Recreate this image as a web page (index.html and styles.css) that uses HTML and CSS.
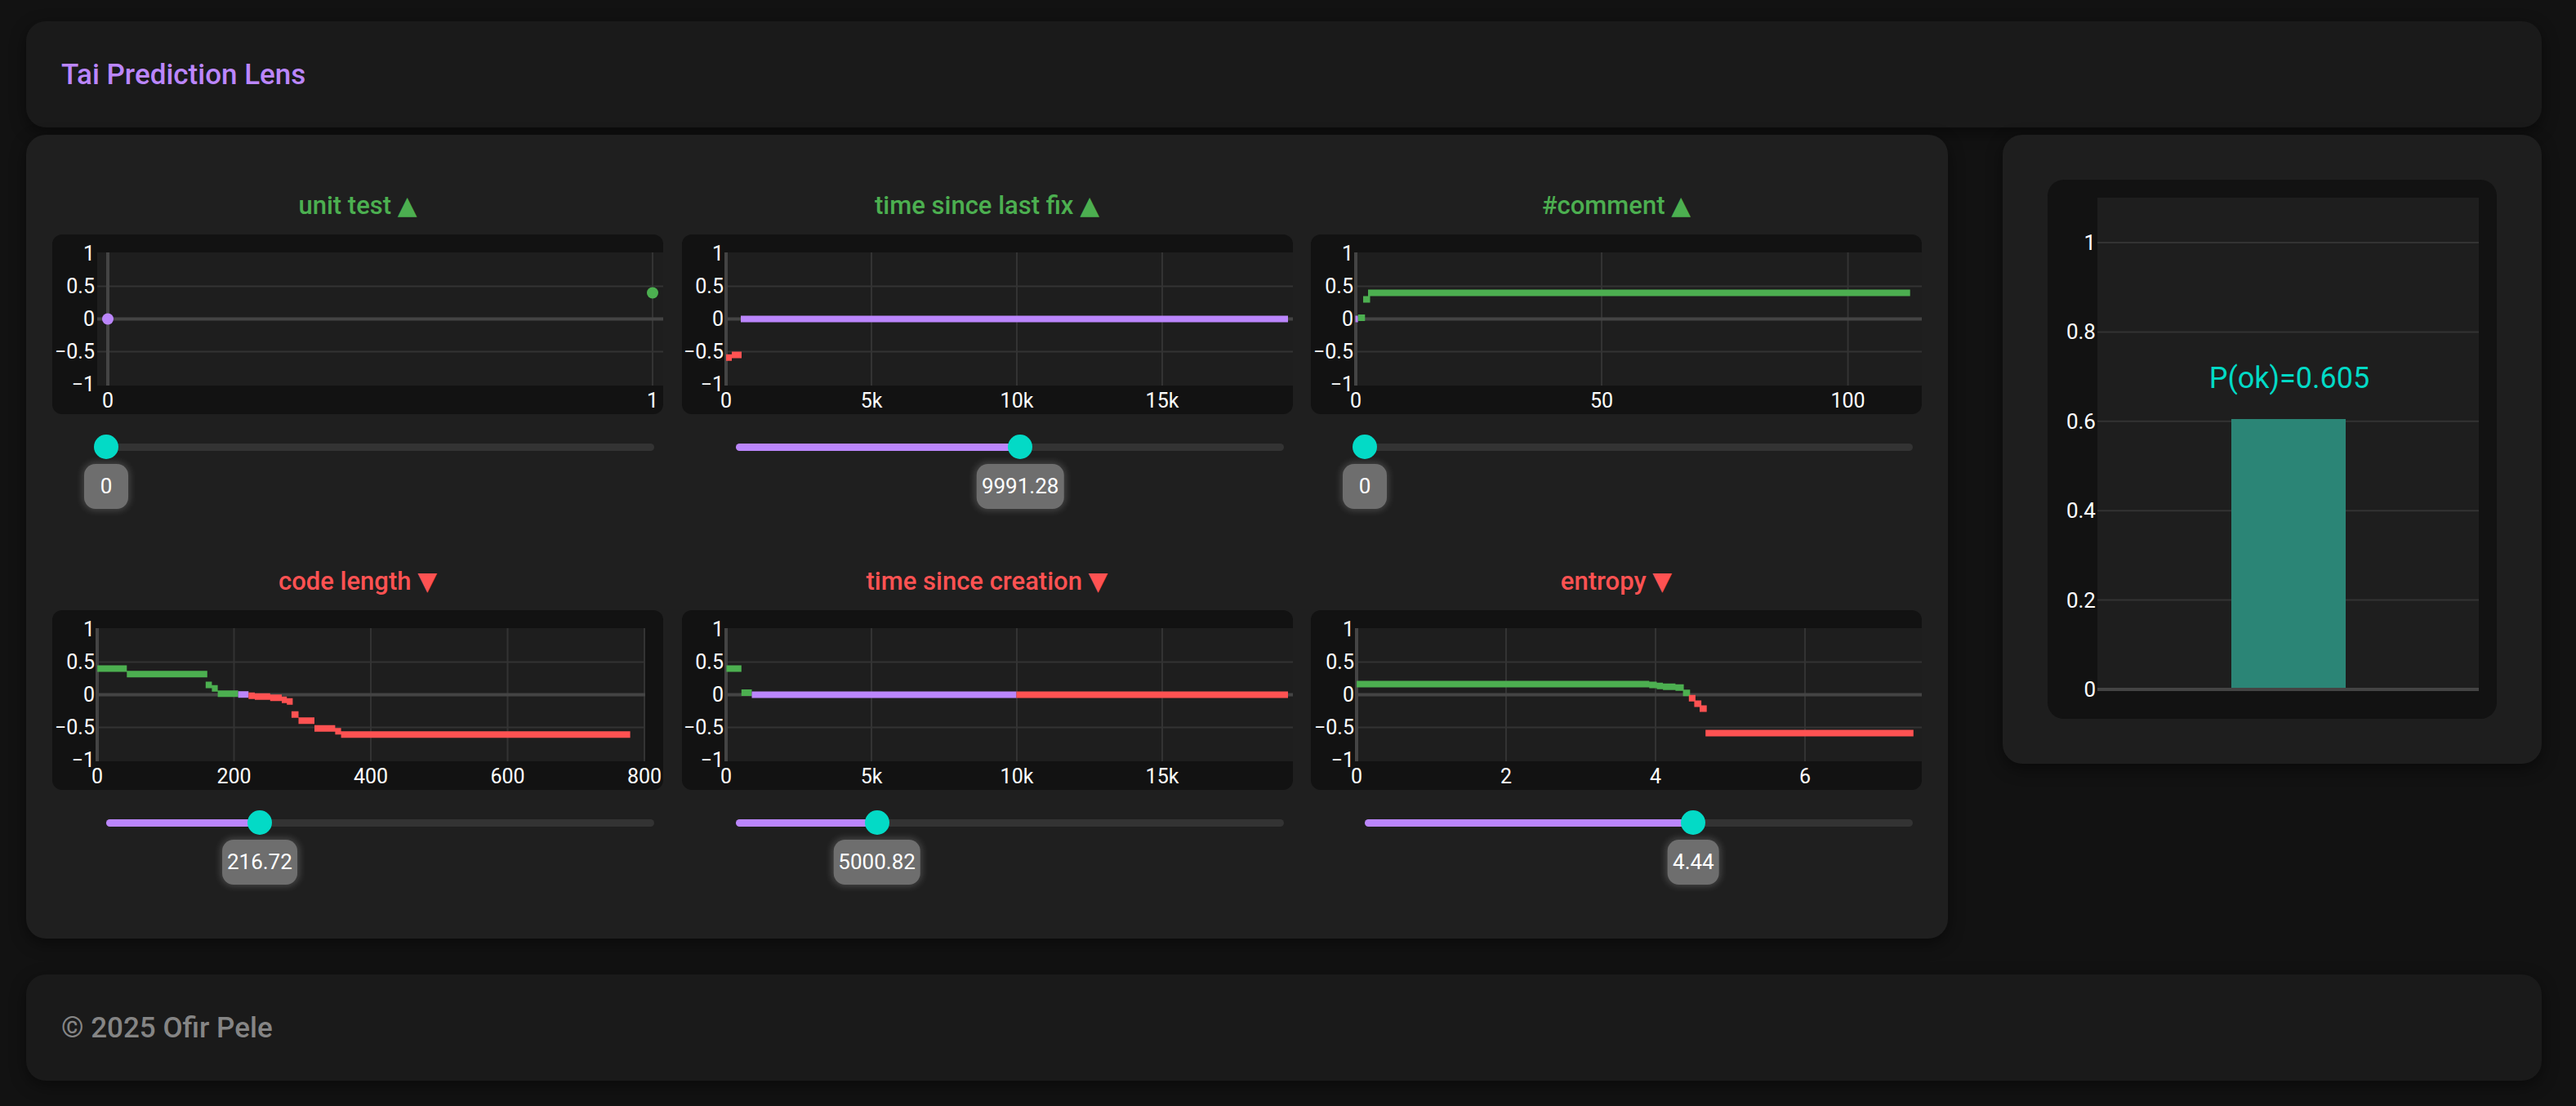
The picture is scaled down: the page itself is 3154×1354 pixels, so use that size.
FILE: index.html
```html
<!DOCTYPE html>
<html lang="en">
<head>
<meta charset="utf-8">
<title>Tai Prediction Lens</title>
<link rel="stylesheet" href="styles.css">
</head>
<body>
<div class="page">
  <header class="card header">
    <h1 class="brand">Tai Prediction Lens</h1>
  </header>

  <main class="content">
    <section class="card features">

      <div class="feature">
        <div class="feat-title up">unit test ▲</div>
        <div class="chart">
          <svg class="plot" viewBox="0 0 748 220">
            <rect class="bg" x="55" y="22" width="693" height="163"/>
            <path class="grid" d="M55 63.5H748M55 143.5H748M735 22V185"/>
            <path class="zero" d="M55 103.5H748M68 22V185"/>
            <circle cx="68" cy="103.5" r="7" fill="#bb86fc"/>
            <circle cx="735" cy="71.5" r="7" fill="#4caf50"/>
            <g class="ylab"><text x="52" y="32.3">1</text><text x="52" y="72.3">0.5</text><text x="52" y="112.3">0</text><text x="52" y="152.3">−0.5</text><text x="52" y="192.3">−1</text></g>
            <g class="xlab"><text x="68" y="212">0</text><text x="735" y="212">1</text></g>
          </svg>
        </div>
        <div class="slider"><div class="rail"><div class="track" style="width:0%"></div><div class="thumb" style="left:0%"><span class="value-label">0</span></div></div></div>
      </div>

      <div class="feature">
        <div class="feat-title up">time since last fix ▲</div>
        <div class="chart">
          <svg class="plot" viewBox="0 0 748 220">
            <rect class="bg" x="54" y="22" width="694" height="163"/>
            <path class="grid" d="M54 63.5H748M54 143.5H748M232 22V185M410 22V185M588 22V185"/>
            <path class="zero" d="M54 103.5H748M54 22V185"/>
            <path class="seg red" d="M54 150.7H61M61 147.5H73"/>
            <path class="seg purple" d="M72 103.5H742"/>
            <g class="ylab"><text x="51" y="32.3">1</text><text x="51" y="72.3">0.5</text><text x="51" y="112.3">0</text><text x="51" y="152.3">−0.5</text><text x="51" y="192.3">−1</text></g>
            <g class="xlab"><text x="54" y="212">0</text><text x="232" y="212">5k</text><text x="410" y="212">10k</text><text x="588" y="212">15k</text></g>
          </svg>
        </div>
        <div class="slider"><div class="rail"><div class="track" style="width:51.96%"></div><div class="thumb" style="left:51.96%"><span class="value-label">9991.28</span></div></div></div>
      </div>

      <div class="feature">
        <div class="feat-title up">#comment ▲</div>
        <div class="chart">
          <svg class="plot" viewBox="0 0 748 220">
            <rect class="bg" x="55" y="22" width="693" height="163"/>
            <path class="grid" d="M55 63.5H748M55 143.5H748M356 22V185M657.6 22V185"/>
            <path class="zero" d="M55 103.5H748M55 22V185"/>
            <path class="seg purple" d="M54.5 103.5H57.7"/>
            <path class="seg green" d="M57.7 102H66.3M64 79.5H72.5M70 71.5H733.7"/>
            <g class="ylab"><text x="52" y="32.3">1</text><text x="52" y="72.3">0.5</text><text x="52" y="112.3">0</text><text x="52" y="152.3">−0.5</text><text x="52" y="192.3">−1</text></g>
            <g class="xlab"><text x="55" y="212">0</text><text x="356" y="212">50</text><text x="657.6" y="212">100</text></g>
          </svg>
        </div>
        <div class="slider"><div class="rail"><div class="track" style="width:0%"></div><div class="thumb" style="left:0%"><span class="value-label">0</span></div></div></div>
      </div>

      <div class="feature">
        <div class="feat-title down">code length ▼</div>
        <div class="chart">
          <svg class="plot" viewBox="0 0 748 220">
            <rect class="bg" x="55" y="22" width="671" height="163"/>
            <path class="grid" d="M55 63.5H726M55 143.5H726M222.5 22V185M390 22V185M557.5 22V185M725 22V185"/>
            <path class="zero" d="M55 103.5H726M55 22V185"/>
            <path class="seg green" d="M55.1 71.5H91.3M91.3 78.2H189.8M187.8 91.5H195.4M195.4 95.7H202.6M202.6 102.3H227.6"/>
            <path class="seg purple" d="M227.6 103.2H240.3"/>
            <path class="seg red" d="M240.3 104.7H248M248 105.7H266.8M266.8 107.3H281M281 109.7H287.2M287.2 111.7H294.4M292.9 127.7H301.5M301.5 135.3H321M321 144.7H346.4M346.4 148.3H353.6M353.6 152.2H707.6"/>
            <g class="ylab"><text x="52" y="32.3">1</text><text x="52" y="72.3">0.5</text><text x="52" y="112.3">0</text><text x="52" y="152.3">−0.5</text><text x="52" y="192.3">−1</text></g>
            <g class="xlab"><text x="55" y="212">0</text><text x="222.5" y="212">200</text><text x="390" y="212">400</text><text x="557.5" y="212">600</text><text x="725" y="212">800</text></g>
          </svg>
        </div>
        <div class="slider"><div class="rail"><div class="track" style="width:28%"></div><div class="thumb" style="left:28%"><span class="value-label">216.72</span></div></div></div>
      </div>

      <div class="feature">
        <div class="feat-title down">time since creation ▼</div>
        <div class="chart">
          <svg class="plot" viewBox="0 0 748 220">
            <rect class="bg" x="54" y="22" width="694" height="163"/>
            <path class="grid" d="M54 63.5H748M54 143.5H748M232 22V185M410 22V185M588 22V185"/>
            <path class="zero" d="M54 103.5H748M54 22V185"/>
            <path class="seg green" d="M54.4 71.5H72.8M72.8 101H85.5"/>
            <path class="seg purple" d="M85.5 103.5H409.5"/>
            <path class="seg red" d="M409.5 103.5H742"/>
            <g class="ylab"><text x="51" y="32.3">1</text><text x="51" y="72.3">0.5</text><text x="51" y="112.3">0</text><text x="51" y="152.3">−0.5</text><text x="51" y="192.3">−1</text></g>
            <g class="xlab"><text x="54" y="212">0</text><text x="232" y="212">5k</text><text x="410" y="212">10k</text><text x="588" y="212">15k</text></g>
          </svg>
        </div>
        <div class="slider"><div class="rail"><div class="track" style="width:25.8%"></div><div class="thumb" style="left:25.8%"><span class="value-label">5000.82</span></div></div></div>
      </div>

      <div class="feature">
        <div class="feat-title down">entropy ▼</div>
        <div class="chart">
          <svg class="plot" viewBox="0 0 748 220">
            <rect class="bg" x="56" y="22" width="692" height="163"/>
            <path class="grid" d="M56 63.5H748M56 143.5H748M239 22V185M422 22V185M605 22V185"/>
            <path class="zero" d="M56 103.5H748M56 22V185"/>
            <path class="seg green" d="M56.1 90.5H414.3M414.3 91.5H423.5M423.5 92.8H431.1M431.1 93.8H446.4M446.4 94.8H456.6M455.6 101.2H464.3"/>
            <path class="seg red" d="M462.8 107.8H470.9M469.4 114.5H478.1M476 120.5H484.7M483.2 150.5H737.8"/>
            <g class="ylab"><text x="53" y="32.3">1</text><text x="53" y="72.3">0.5</text><text x="53" y="112.3">0</text><text x="53" y="152.3">−0.5</text><text x="53" y="192.3">−1</text></g>
            <g class="xlab"><text x="56" y="212">0</text><text x="239" y="212">2</text><text x="422" y="212">4</text><text x="605" y="212">6</text></g>
          </svg>
        </div>
        <div class="slider"><div class="rail"><div class="track" style="width:59.97%"></div><div class="thumb" style="left:59.97%"><span class="value-label">4.44</span></div></div></div>
      </div>

    </section>

    <aside class="card prob">
      <div class="prob-chart">
        <svg class="plot" viewBox="0 0 550 660">
          <rect class="bg" x="61" y="22" width="467" height="603"/>
          <path class="grid" d="M61 514.6H528M61 405.2H528M61 295.8H528M61 186.4H528M61 77H528"/>
          <rect x="225" y="293" width="140" height="331" fill="#2b8576"/>
          <path class="zero" d="M61 624H528"/>
          <text class="plabel" x="296" y="255">P(ok)=0.605</text>
          <g class="ylab big"><text x="59" y="86">1</text><text x="59" y="195.4">0.8</text><text x="59" y="304.8">0.6</text><text x="59" y="414.2">0.4</text><text x="59" y="523.6">0.2</text><text x="59" y="633">0</text></g>
        </svg>
      </div>
    </aside>
  </main>

  <footer class="card footer">© 2025 Ofir Pele</footer>
</div>
</body>
</html>
```
FILE: styles.css
```css
* { box-sizing: border-box; }

html, body {
  margin: 0;
  padding: 0;
  background: #121212;
}

body {
  font-family: Roboto, "Noto Sans", "DejaVu Sans", sans-serif;
  color: #ffffff;
}

.page {
  padding: 26px 42px 30px 32px;
  display: flex;
  flex-direction: column;
}

.card {
  background: #1e1e1e;
  border-radius: 24px;
  box-shadow: 0 6px 20px rgba(0, 0, 0, 0.45);
}

.header {
  height: 130px;
  display: flex;
  align-items: center;
  padding: 0 43px;
  background: #1a1a1a;
}

.brand {
  margin: 0;
  font-size: 35px;
  font-weight: 500;
  color: #bb86fc;
}

.content {
  display: flex;
  align-items: flex-start;
  gap: 67px;
  margin-top: 9px;
}

.features {
  flex: none;
  width: 2353px;
  padding: 32px;
  display: grid;
  grid-template-columns: repeat(3, 1fr);
  column-gap: 22.5px;
  background: #1f1f1f;
}

.feature {
  padding: 37px 0 95px;
}

.feat-title {
  font-size: 31px;
  font-weight: 500;
  line-height: 36px;
  text-align: center;
  margin-bottom: 17px;
}

.up { color: #4caf50; }
.down { color: #ff5252; }

.chart {
  height: 220px;
  background: #121212;
  border-radius: 12px;
  overflow: hidden;
}

.plot {
  display: block;
  width: 100%;
  height: 100%;
}

.plot .bg { fill: #1e1e1e; }
.plot .grid { stroke: #333333; stroke-width: 2; fill: none; }
.plot .zero { stroke: #444444; stroke-width: 4; fill: none; }
.plot .seg { stroke-width: 8; fill: none; }
.plot .green { stroke: #4caf50; }
.plot .red { stroke: #ff5252; }
.plot .purple { stroke: #bb86fc; }

.plot text {
  font-family: Roboto, "Noto Sans", sans-serif;
  font-size: 25px;
  fill: #ffffff;
}

.plot .ylab text { text-anchor: end; }
.plot .xlab text { text-anchor: middle; }
.plot .big text { font-size: 26px; }

.plot .plabel {
  font-size: 36px;
  fill: #03dac6;
  text-anchor: middle;
}

.slider {
  margin-top: 25px;
  padding: 0 11px 0 66px;
}

.rail {
  position: relative;
  height: 30px;
}

.rail::before {
  content: "";
  position: absolute;
  left: 0;
  right: 0;
  top: 10.5px;
  height: 9px;
  border-radius: 5px;
  background: #333333;
}

.track {
  position: absolute;
  left: 0;
  top: 10.5px;
  height: 9px;
  border-radius: 5px;
  background: #bb86fc;
}

.thumb {
  position: absolute;
  top: 0;
  width: 30px;
  height: 30px;
  margin-left: -15px;
  border-radius: 50%;
  background: #03dac6;
}

.value-label {
  position: absolute;
  top: 36px;
  left: 50%;
  transform: translateX(-50%);
  min-width: 54px;
  height: 55px;
  padding: 0 6px;
  border-radius: 14px;
  background: #6e6e6e;
  box-shadow: 0 0 8px 2px rgba(255, 255, 255, 0.18);
  font-size: 26px;
  line-height: 55px;
  text-align: center;
  color: #ffffff;
  white-space: nowrap;
}

.prob {
  flex: none;
  width: 660px;
  padding: 55px;
}

.prob-chart {
  height: 660px;
  background: #121212;
  border-radius: 20px;
  overflow: hidden;
}

.footer {
  margin-top: 44px;
  height: 130px;
  display: flex;
  align-items: center;
  padding: 0 43px;
  background: #1a1a1a;
  font-size: 35px;
  font-weight: 500;
  color: #858585;
}
```
